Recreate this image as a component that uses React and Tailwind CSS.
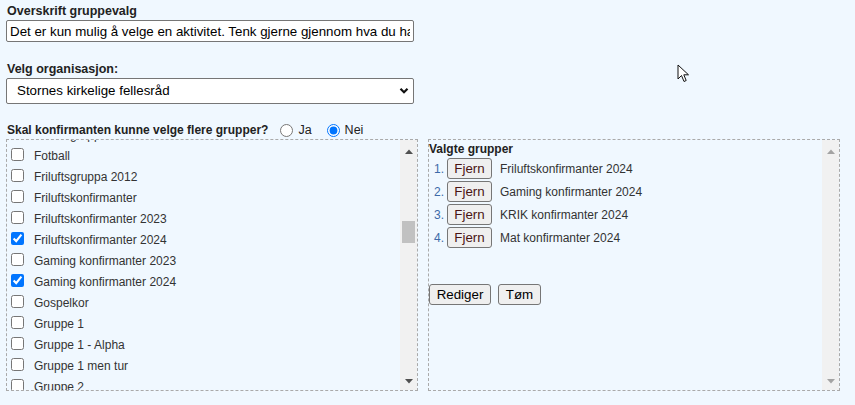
import { useLayoutEffect, useRef } from 'react';

const FONT = { fontFamily: "'Liberation Sans', Arial, sans-serif" };

const BEFORE = [
  'Aktivitetsgruppe', 'Alpha', 'Alpha 2023', 'Alpha 2024', 'Badminton', 'Band', 'Band 2023', 'Band 2024',
  'Basket', 'Bibelgruppe', 'Bowling', 'Bygdekonfirmanter', 'Dans', 'Dans 2023', 'Dans 2024', 'Drama',
  'Drama 2023', 'Drama 2024', 'Diakoni', 'E-sport', 'Ekstra gruppe', 'Fjellgruppa', 'Fiske', 'Fiske 2023',
  'Fiske 2024', 'Film', 'Film 2023', 'Film 2024', 'Foto', 'Foto 2023', 'Foto 2024', 'Fotball 2019',
  'Fotball 2020', 'Fotball 2021', 'Fotball 2022', 'Fotball 2023', 'Fotball 2024', 'Fotballgruppa',
];

const VISIBLE = [
  'Fotball', 'Friluftsgruppa 2012', 'Friluftskonfirmanter', 'Friluftskonfirmanter 2023',
  'Friluftskonfirmanter 2024', 'Gaming konfirmanter 2023', 'Gaming konfirmanter 2024', 'Gospelkor',
  'Gruppe 1', 'Gruppe 1 - Alpha', 'Gruppe 1 men tur', 'Gruppe 2',
];

const AFTER = [
  'Gruppe 3', 'Gruppe 4', 'Gruppe 5', 'Gruppe 6', 'Håndball', 'Hest', 'Innebandy', 'Jenter',
  'Klatring', 'Kor', 'KRIK konfirmanter 2023', 'KRIK konfirmanter 2024', 'Kunst', 'Leir', 'Lederkurs',
  'Mat konfirmanter 2023', 'Mat konfirmanter 2024', 'Misjon', 'Musikal', 'Natur', 'Orgel', 'Padling',
  'Ridning', 'Seiling', 'Ski', 'Sykkel', 'Teater', 'Tur', 'Ungdomsklubb', 'Volleyball', 'Vandring',
  'Vennegruppe', 'Øvrige', 'Ånd og kropp',
  ...Array.from({ length: 40 }, (_, i) => `Gruppe ${i + 7}`),
];

const ALL = [...BEFORE, ...VISIBLE, ...AFTER];
const CHECKED = ['Friluftskonfirmanter 2024', 'Gaming konfirmanter 2024', 'KRIK konfirmanter 2024', 'Mat konfirmanter 2024'];

// klassisk scrollbar (headless viser ingen)
function Scrollbar({ thumb, arrow }) {
  return (
    <div className="w-[17px] shrink-0 bg-[#f1f1f1] flex flex-col items-center">
      <svg className="mt-[9px]" width="8" height="5" viewBox="0 0 8 5"><polygon points="0,5 4,0.5 8,5" fill={arrow}/></svg>
      <div className="flex-1 w-full">
        {thumb && <div className="ml-[2px] mt-[67px] w-[13px] h-[22px] bg-[#c1c1c1]"/>}
      </div>
      <svg className="mb-[6px]" width="8" height="5" viewBox="0 0 8 5"><polygon points="0,0 8,0 4,4.5" fill={arrow}/></svg>
    </div>
  );
}

function Cursor() {
  return (
    <svg className="absolute left-[677px] top-[64px]" width="14" height="20" viewBox="0 0 14 20">
      <path d="M1 1 L1 15 L4.5 11.5 L7 17.5 L9.2 16.5 L6.8 10.8 L11.5 10.8 Z" fill="#fff" stroke="#111" strokeWidth="1" strokeLinejoin="round"/>
    </svg>
  );
}

const BTN = 'h-[21px] border border-[#767676] rounded-[3px] bg-[#efefef] text-[13.33px]';

export default function App() {
  const listRef = useRef(null);
  useLayoutEffect(() => {
    if (listRef.current) listRef.current.scrollTop = BEFORE.length * 21 - 6;
  }, []);

  return (
    <div className="relative min-h-[405px] w-[855px] bg-[#f0f8ff] text-[#222] text-[12px]" style={FONT}>
      <div className="pl-[7px] pt-[3px]">
        <p className="font-bold leading-[16px] text-[12.5px]">Overskrift gruppevalg</p>
        <input type="text" readOnly
          value="Det er kun mulig å velge en aktivitet. Tenk gjerne gjennom hva du har lyst til å gjøre"
          className="mt-[1px] -ml-[1px] block w-[408px] h-[22px] border border-[#767676] rounded-[2px] bg-white px-[3px] text-[13.33px] text-black outline-none"/>

        <p className="mt-[19px] font-bold leading-[16px] text-[12.5px]">Velg organisasjon:</p>
        <div className="relative mt-[1px] -ml-[1px] w-[408px] h-[26px] border border-[#767676] rounded-[2px] bg-white">
          <p className="pl-[10px] leading-[24px] text-[13.33px] text-black">Stornes kirkelige fellesråd</p>
          <svg className="absolute right-[4px] top-[8px]" width="10" height="8" viewBox="0 0 10 8">
            <polyline points="1.5,1.8 5,5.3 8.5,1.8" fill="none" stroke="#111" strokeWidth="2.2"/>
          </svg>
        </div>

        <div className="mt-[18px] flex items-center h-[16px]">
          <span className="font-bold">Skal konfirmanten kunne velge flere grupper?</span>
          <input type="radio" name="flere" className="ml-[12px] mr-[5px] w-[13px] h-[13px]"/>
          <span className="text-[12.5px]">Ja</span>
          <input type="radio" name="flere" defaultChecked className="ml-[15px] mr-[5px] w-[13px] h-[13px]"/>
          <span className="text-[12.5px]">Nei</span>
        </div>
      </div>

      <div className="flex gap-[10px] pl-[6px] mt-[1px]">
        <div className="w-[412px] h-[252px] border border-dashed border-[#aaa] flex">
          <div ref={listRef} className="flex-1 overflow-hidden text-[#333]">
            {ALL.map((name, i) => (
              <label key={i} className="flex items-start h-[21px] leading-[21px] whitespace-nowrap">
                <input type="checkbox" readOnly checked={CHECKED.includes(name)} className="mt-[2px] ml-[4px] w-[13px] h-[13px] shrink-0"/>
                <span className="ml-[10px]">{name}</span>
              </label>
            ))}
          </div>
          <Scrollbar thumb arrow="#505050"/>
        </div>

        <div className="w-[412px] h-[252px] border border-dashed border-[#aaa] flex">
          <div className="flex-1 text-[#333]">
            <p className="pt-[1px] font-bold leading-[16px] text-[#222]">Valgte grupper</p>
            <div>
              {CHECKED.map((name, i) => (
                <div key={name} className="flex items-center h-[23px]">
                  <span className="w-[15px] text-right text-[#3d6aa8]">{i + 1}.</span>
                  <button className={`${BTN} ml-[3px] w-[45px] text-[#4a1414]`}>Fjern</button>
                  <span className="ml-[8px]">{name}</span>
                </div>
              ))}
            </div>
            <div className="mt-[35px] flex gap-[7px]">
              <button className={`${BTN} w-[62px] text-black`}>Rediger</button>
              <button className={`${BTN} w-[43px] text-black`}>Tøm</button>
            </div>
          </div>
          <Scrollbar arrow="#a3a3a3"/>
        </div>
      </div>

      <Cursor/>
    </div>
  );
}
